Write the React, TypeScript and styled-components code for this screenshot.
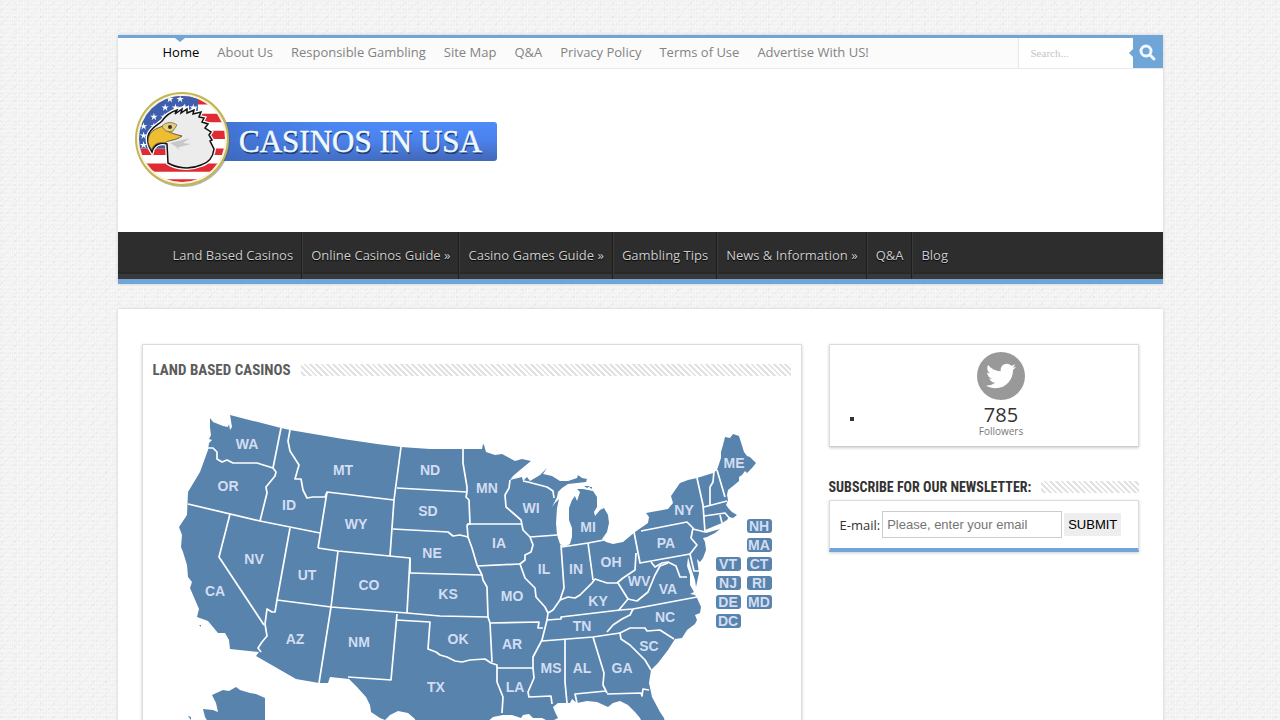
import React from 'react';
import styled, { createGlobalStyle } from 'styled-components';
import { FaTwitter } from 'react-icons/fa';

const BLUE = '#70a5d7';
const SANS = '"Open Sans", "Noto Sans", sans-serif';
const NARROW = '"Liberation Sans Narrow", "Roboto Condensed", "Liberation Sans", sans-serif';

const GlobalStyle = createGlobalStyle`
  * { box-sizing: border-box; }
  body {
    margin: 0;
    font-family: ${SANS};
    font-size: 13px;
    color: #333;
    background-color: #f7f7f7;
    background-image:
      linear-gradient(135deg, transparent 46%, rgba(0,0,0,.03) 46% 54%, transparent 54%),
      linear-gradient(90deg, rgba(0,0,0,.012) 1px, transparent 1px),
      radial-gradient(circle at 1px 1px, rgba(0,0,0,.02) 1px, transparent 1px),
      radial-gradient(circle at 2px 3px, rgba(0,0,0,.03) 1px, transparent 1px);
    background-size: 11px 13px, 2px 2px, 3px 4px, 13px 7px;
  }
  a { color: inherit; text-decoration: none; }
  ul { list-style: none; margin: 0; padding: 0; }
`;

const Page = styled.div`
  max-width: 1045px;
  margin: 0 auto;
  padding: 35px 0 25px;
`;

const Header = styled.header`
  background: #fff;
  border-top: 3px solid ${BLUE};
  box-shadow: 0 0 3px #cacaca;
`;

const TopBar = styled.div`
  display: flex;
  justify-content: space-between;
  height: 31px;
  background: #fbfbfb;
  border-bottom: 1px solid #eaeaea;
`;

const TopMenu = styled.ul`
  display: flex;
  padding-left: 36px;
`;

const TopLink = styled.a<{ $active?: boolean }>`
  position: relative;
  display: block;
  padding: 0 9px;
  line-height: 29px;
  color: ${p => (p.$active ? '#000' : '#838383')};
  &::before {
    content: '';
    display: ${p => (p.$active ? 'block' : 'none')};
    position: absolute;
    top: 0;
    left: calc(50% - 6px);
    border: 5px solid transparent;
    border-top: 4px solid ${BLUE};
    border-bottom: 0;
  }
`;

const SearchForm = styled.form`
  display: flex;
  height: 30px;
  border-left: 1px solid #e6e6e6;
  background: #fff;
`;

const SearchInput = styled.input`
  width: 114px;
  padding: 0 0 0 12px;
  border: 0;
  background: transparent;
  font: 11px "Liberation Serif", serif;
  &::placeholder { color: #c4c4c4; }
`;

const SearchButton = styled.button`
  position: relative;
  width: 30px;
  padding: 0;
  border: 0;
  background: ${BLUE};
  svg { display: block; margin: 0 auto; }
  &::before {
    content: '';
    position: absolute;
    top: 11px;
    left: -4px;
    border: 4px solid transparent;
    border-right-color: ${BLUE};
    border-left: 0;
  }
`;

const Brand = styled.div`
  height: 163px;
  padding: 21px 15px;
  svg { display: block; }
`;

const MainNav = styled.nav`
  height: 52px;
  padding-left: 47px;
  background: linear-gradient(#2d2d2d 0 40px, #292929 40px 42px, #393939 42px);
  border-bottom: 5px solid ${BLUE};
`;

const MainMenu = styled.ul`
  display: flex;
`;

const MenuItem = styled.li`
  border-left: 1px solid #3a3a3a;
  border-right: 1px solid #1e1e1e;
  &:first-child { border-left: 0; }
  &:last-child { border-right: 0; }
`;

const MenuLink = styled.a`
  display: block;
  padding: 0 8px;
  line-height: 47px;
  color: #ccc;
  text-shadow: 0 1px 1px #000;
`;

const Content = styled.div`
  display: flex;
  align-items: flex-start;
  gap: 27px;
  margin-top: 25px;
  padding: 35px 24px;
  background: #fff;
  box-shadow: 0 0 3px #cacaca;
`;

const Panel = styled.section<{ $accent?: boolean }>`
  background: #fff;
  border: 1px solid #dcdcdc;
  border-bottom: ${p => (p.$accent ? `4px solid ${BLUE}` : '1px solid #ccc')};
  box-shadow: 0 1px 3px #ccc;
`;

const MapPanel = styled(Panel)`
  flex: 1;
  min-width: 0;
  padding: 10px;
`;

const Sidebar = styled.aside`
  width: 310px;
`;

const Heading = styled.div`
  display: flex;
  align-items: center;
  gap: 10px;
  &::after {
    content: '';
    flex: 1;
    height: 12px;
    background: repeating-linear-gradient(45deg, #fff 0 2px, #e2e2e2 2px 4px);
  }
`;

const Title = styled.h2<{ $side?: boolean }>`
  margin: 0;
  font-family: ${NARROW};
  font-size: ${p => (p.$side ? '14px' : '15px')};
  line-height: ${p => (p.$side ? '26px' : '30px')};
  color: ${p => (p.$side ? '#333' : '#5c5c5c')};
  text-transform: uppercase;
`;

const StateMap = styled.svg`
  display: block;
  width: 100%;
  margin-top: 10px;
  font: bold 14px "Liberation Sans", sans-serif;
  fill: #d3ddf2;
  text-anchor: middle;
`;

const Counters = styled.ul`
  height: 101px;
  padding: 7px 5px 0 20px;
`;

const Counter = styled.li`
  display: flex;
  gap: 16px;
  text-align: center;
  &::before {
    content: '';
    width: 4px;
    height: 4px;
    margin-top: 65px;
    background: #333;
  }
  a { flex: 1; }
`;

const Round = styled.span`
  display: flex;
  align-items: center;
  justify-content: center;
  width: 48px;
  height: 48px;
  margin: 0 auto 5px;
  border-radius: 50%;
  background: #999;
  color: #fff;
  font-size: 30px;
`;

const Count = styled.span`
  display: block;
  font-size: 20px;
  line-height: 20px;
`;

const Caption = styled.small`
  display: block;
  font-size: 10px;
  line-height: 12px;
  color: #777;
`;

const Newsletter = styled.div`
  margin-top: 27px;
`;

const Subscribe = styled.form`
  display: flex;
  align-items: center;
  gap: 2px;
  height: 47px;
  padding: 0 10px;
`;

const EmailInput = styled.input`
  width: 180px;
  height: 27px;
  padding: 0 4px;
  border: 1px solid #ccc;
  font: 13px "Liberation Sans", sans-serif;
`;

const Submit = styled.button`
  height: 23px;
  padding: 0 4px;
  border: 0;
  background: #eee;
  font: 13px "Liberation Sans", sans-serif;
  color: #000;
`;

const topLinks = ['Home', 'About Us', 'Responsible Gambling', 'Site Map', 'Q&A', 'Privacy Policy', 'Terms of Use', 'Advertise With US!'];
const mainLinks = ['Land Based Casinos', 'Online Casinos Guide »', 'Casino Games Guide »', 'Gambling Tips', 'News & Information »', 'Q&A', 'Blog'];

const mainland =
  '210,418 213,422 223,426 228,427 229,424 230,430 232,427 230,415 281,428 290,430 343,439 377,444 401,447 430,449 463,449 482,449 483,444 484,445 486,452 495,455 502,454 515,461 522,459 531,461 520,470 513,476 510,480 522,477 523,481 527,477 530,481 540,475 547,468 543,474 552,476 560,481 568,481 577,478 578,475 582,478 587,479 586,482 577,483 568,484 562,488 558,492 557,497 552,507 555,503 559,499 557,508 556,523 557,535 560,544 564,547 570,544 572,537 572,528 569,520 569,508 572,500 575,496 577,501 580,492 577,489 583,489 593,491 597,497 597,507 594,512 595,516 600,510 604,508 608,515 609,523 607,532 602,539 606,542 613,544 623,542 635,532 648,523 649,517 646,513 657,511 668,509 673,503 671,496 680,483 688,480 697,478 713,473 717,470 721,458 721,452 723,445 725,437 730,438 733,434 739,436 744,452 747,456 750,457 756,463 752,468 747,473 745,471 742,475 739,477 739,481 733,486 728,490 727,495 728,500 726,505 729,509 732,512 737,515 733,518 729,517 727,520 722,523 705,530 706,533 713,531 720,529 715,533 707,537 703,538 705,542 706,550 703,558 700,562 697,559 699,573 696,587 695,580 691,568 688,557 687,566 690,575 690,585 694,592 690,594 695,595 697,598 701,607 700,613 695,615 697,620 695,624 687,630 682,638 675,639 668,650 658,663 651,670 649,683 652,697 660,712 664,718 668,735 648,735 640,718 635,712 628,705 620,701 613,703 608,707 597,702 587,701 577,703 572,699 570,703 558,703 553,707 555,712 558,718 550,722 542,718 533,718 529,714 523,715 521,718 512,715 503,715 493,717 480,728 470,745 420,745 415,719 408,713 398,711 390,715 385,720 380,718 371,712 370,705 366,697 357,687 349,679 330,677 328,683 319,683 296,679 256,656 259,652 230,649 229,640 225,633 218,633 213,627 208,621 197,617 199,609 190,588 192,582 188,577 187,565 183,552 181,547 182,535 179,527 187,515 188,492 200,472 208,450 209,443 212,440 209,439 211,435 210,428';

const alaska =
  '212,695 223,690 229,691 236,687 240,690 250,693 256,694 265,698 265,745 222,745 205,717 203,709 213,710 218,712 216,703';

const borders = [
  '208,448 213,448 217,452 217,459 222,462 227,460 233,463 240,463 257,463 273,468 276,472 275,476 266,487 267,493 260,521',
  '281,428 273,468',
  '188,504 260,521 320,533',
  '290,430 288,441 290,451 299,465 295,479 301,479 303,490 307,498 313,497 325,497 327,492',
  '318,548 327,492 394,500',
  '401,447 394,500 390,556',
  '318,548 338,551 410,558 410,573',
  '338,551 331,607 319,683',
  '230,514 219,557 264,625',
  '290,528 277,600 275,612 272,612 267,609 265,624 267,636 262,642 258,648 261,652',
  '277,600 331,607 407,613 440,616 488,617',
  '410,558 407,613',
  '397,614 391,680 348,677',
  '396,620 430,622 428,649 436,652 440,655 447,657 455,661 462,662 470,660 485,659 491,663 497,665 497,682 503,697 502,713',
  '497,668 533,668',
  '488,617 490,623 492,662',
  '410,573 482,575 483,580 487,587 488,617',
  '393,529 448,532 453,536 460,535 468,537',
  '397,488 467,492',
  '463,449 463,463 467,487 467,492 466,497 469,500 470,524 467,525 468,537 472,548 477,565 482,575',
  '467,524 521,524',
  '510,480 509,488 505,495 506,507 513,513 521,520 523,530 530,537 533,545 531,552 525,555 525,560 520,564 525,578 535,588 536,597 545,607 548,613 547,620 542,640 533,657 533,668 534,678 528,692 529,697 551,696 552,704',
  '477,566 520,564',
  '490,623 539,622 538,628 543,628',
  '530,537 557,535',
  '561,545 564,588 560,600 553,610 548,613',
  '562,547 588,543 604,540',
  '588,543 593,580',
  '560,600 568,597 575,598 580,595 592,583 595,579 607,583 617,583 623,578 635,570 636,553',
  '634,532 640,563 690,554',
  '641,531 687,522 693,528 691,538 697,545 690,554 694,571 700,571',
  '693,529 705,532 703,505 697,478',
  '714,471 713,482 710,487 710,505',
  '717,470 725,497',
  '704,507 727,501',
  '704,516 725,513 731,520',
  '720,515 722,523',
  '523,481 528,482 547,487 553,491 554,498',
  '547,620 561,619 561,617 620,610 633,609 697,597',
  '618,583 628,599 618,611',
  '628,599 637,601 648,592 655,575 660,566 668,563',
  '651,562 655,567 662,563 668,562 676,566 680,577 687,577',
  '542,641 593,637 620,633',
  '633,609 630,615 622,619 613,625 607,632',
  '674,639 660,630 647,631 645,628 630,628 620,633 621,639 630,645 645,660 651,670',
  '565,639 565,682 567,703',
  '593,637 600,660 604,673 603,685 607,693',
  '577,703 575,694 606,691',
  '607,694 641,693 642,696 643,689 649,690',
];

const labels: [string, number, number][] = [
  ['WA', 247, 444], ['OR', 228, 486], ['ID', 289, 505], ['MT', 343, 470], ['WY', 356, 524], ['ND', 430, 470],
  ['SD', 428, 511], ['NE', 432, 553], ['MN', 487, 488], ['WI', 531, 508], ['IA', 499, 543], ['MI', 588, 527],
  ['NV', 254, 559], ['UT', 307, 575], ['CO', 369, 585], ['CA', 215, 591], ['AZ', 295, 639], ['NM', 359, 642],
  ['KS', 448, 594], ['OK', 458, 639], ['TX', 436, 687], ['MO', 512, 596], ['AR', 512, 644], ['LA', 515, 687],
  ['IL', 544, 569], ['IN', 576, 569], ['OH', 611, 562], ['KY', 598, 601], ['TN', 582, 626], ['MS', 551, 668],
  ['AL', 582, 668], ['GA', 622, 668], ['SC', 649, 646], ['NC', 665, 617], ['VA', 668, 589], ['WV', 639, 581],
  ['PA', 666, 543], ['NY', 684, 510], ['ME', 734, 463],
];

const badges: [string, number, number][] = [
  ['NH', 759, 526], ['MA', 759, 545], ['VT', 728, 564], ['CT', 759, 564], ['NJ', 728, 583], ['RI', 759, 583],
  ['DE', 728, 602], ['MD', 759, 602], ['DC', 728, 621],
];

const Stripes = () => (
  <g fill="#e02b35">
    <path d="M39 0h60v9H39zM39 19h60v9H39zM39 37h60v9H39zM0 56h99v7H0zM0 72h99v9H0zM0 89h99v8H0z" />
  </g>
);

const starPoints = [[29, 12], [40, 12], [50, 12], [59, 12], [17, 22], [28, 22], [39, 21], [17, 32], [6, 32], [6, 42], [6, 52], [34, 3], [45, 3]];

const headOutline =
  'M15 46C17 38 25 35 29 31C33 25 38 22 44 20L42 24L49 19L48 23L54 19L54 23L61 20L60 24L68 22L66 27L71 28L69 32L75 34L72 38L78 42L76 45L79 50L77 51L81 59C80 67 75 73 68 75C57 80 43 78 35 73L34 54C28 52 21 54 19 62C15 56 14 51 15 46Z';

const Logo = () => (
  <svg width="366" height="102" viewBox="0 0 366 102" role="img" aria-label="Casinos in USA">
    <defs>
      <linearGradient id="bar" x1="0" y1="0" x2="0" y2="1">
        <stop offset="0" stopColor="#4e8bfa" />
        <stop offset=".45" stopColor="#4b82ec" />
        <stop offset="1" stopColor="#4268b8" />
      </linearGradient>
      <linearGradient id="fade">
        <stop offset="0" stopColor="#3a66bd" stopOpacity=".7" />
        <stop offset="1" stopColor="#4e8bfa" stopOpacity="0" />
      </linearGradient>
      <clipPath id="disc"><circle cx="49" cy="49" r="43" /></clipPath>
    </defs>
    <rect x="80" y="32" width="284" height="39" rx="3" fill="url(#bar)" />
    <rect x="80" y="32" width="200" height="39" fill="url(#fade)" />
    <g fontFamily="Liberation Serif, serif" fontSize="31">
      <text x="107" y="64" fill="#243b70">CASINOS IN USA</text>
      <text x="106" y="62" fill="#eefaff" stroke="#eefaff" strokeWidth=".5">CASINOS IN USA</text>
    </g>
    <circle cx="50" cy="50" r="47" fill="#59605d" opacity=".45" />
    <circle cx="49" cy="49" r="47" fill="#c5b553" />
    <circle cx="49" cy="49" r="45" fill="#f8f5df" />
    <g clipPath="url(#disc)">
      <circle cx="49" cy="49" r="43" fill="#fff" />
      <svg x="5" y="6" width="88" height="88" viewBox="0 0 94 94">
        <Stripes />
        <path d="M0 0h64v20H39v36H0z" fill="#3e5fae" />
        {starPoints.map(([x, y]) => (
          <path key={`${x}-${y}`} transform={`translate(${x} ${y}) scale(.8)`} d="M0-5 1-1 5-1 2 1 3 5 0 2-3 5-2 1-5-1-1-1Z" fill="#fff" />
        ))}
      </svg>
    </g>
    <path d={headOutline} fill="none" stroke="#fff" strokeWidth="4" />
    <path d={headOutline} fill="#ececec" stroke="#111" strokeWidth="1.5" />
    <path d="M16 46C18 40 25 38 30 36C33 42 41 44 49 46C43 51 34 50 32 53C25 52 20 54 19 60C15 55 14 51 16 46Z" fill="#edbd32" stroke="#453e2b" strokeWidth=".8" />
    <path d="M29 36C34 31 40 32 44 35L40 41C35 43 31 41 29 36Z" fill="#e7ce78" stroke="#625a43" strokeWidth=".7" />
    <circle cx="37" cy="37" r="2" fill="#333" />
    <path d="M37 53 57 48 50 53 58 54 43 58 48 60" fill="#c8c8ca" />
  </svg>
);

const UsMap = () => (
  <StateMap viewBox="153 395 638 345" role="group" aria-label="Map of the United States">
    <g fill="#5783ad">
      <polygon points={mainland} />
      <polygon points={alaska} />
      <path d="M584 486l6 0-3 2zM589 487h3v2zM199 625h2v2zM188 716l3 1v3z" />
    </g>
    <g fill="none" stroke="#fff" strokeWidth="1.7" strokeLinejoin="round">
      {borders.map(points => <polyline key={points} points={points} />)}
    </g>
    {labels.map(([name, x, y]) => (
      <a key={name} href={`#${name}`}><text x={x} y={y + 5}>{name}</text></a>
    ))}
    {badges.map(([name, x, y]) => (
      <a key={name} href={`#${name}`}>
        <rect x={x - 12} y={y - 7} width="25" height="14" rx="3" fill="#5783ad" />
        <text x={x} y={y + 5}>{name}</text>
      </a>
    ))}
  </StateMap>
);

export default function App() {
  return (
    <>
      <GlobalStyle />
      <Page>
        <Header>
          <TopBar>
            <nav aria-label="Pages">
              <TopMenu>
                {topLinks.map((text, i) => (
                  <li key={text}><TopLink href="#" $active={i === 0}>{text}</TopLink></li>
                ))}
              </TopMenu>
            </nav>
            <SearchForm role="search">
              <SearchInput type="text" aria-label="Search" placeholder="Search..." />
              <SearchButton type="submit" aria-label="Search">
                <svg width="18" height="18" viewBox="0 0 18 18" fill="none" stroke="#f1f7fd">
                  <circle cx="7" cy="7" r="5" strokeWidth="3" />
                  <path d="M11 11 15 15" strokeWidth="3" strokeLinecap="round" />
                </svg>
              </SearchButton>
            </SearchForm>
          </TopBar>
          <Brand><a href="#"><Logo /></a></Brand>
          <MainNav aria-label="Main">
            <MainMenu>
              {mainLinks.map(text => (
                <MenuItem key={text}><MenuLink href="#">{text}</MenuLink></MenuItem>
              ))}
            </MainMenu>
          </MainNav>
        </Header>
        <Content>
          <MapPanel>
            <Heading><Title>Land Based Casinos</Title></Heading>
            <UsMap />
          </MapPanel>
          <Sidebar>
            <Panel>
              <Counters>
                <Counter>
                  <a href="#">
                    <Round><FaTwitter /></Round>
                    <Count>785</Count>
                    <Caption>Followers</Caption>
                  </a>
                </Counter>
              </Counters>
            </Panel>
            <Newsletter>
              <Heading><Title $side>Subscribe for our newsletter:</Title></Heading>
              <Panel $accent>
                <Subscribe>
                  <label htmlFor="email">E-mail:</label>
                  <EmailInput id="email" type="email" placeholder="Please, enter your email" />
                  <Submit type="submit">SUBMIT</Submit>
                </Subscribe>
              </Panel>
            </Newsletter>
          </Sidebar>
        </Content>
      </Page>
    </>
  );
}
